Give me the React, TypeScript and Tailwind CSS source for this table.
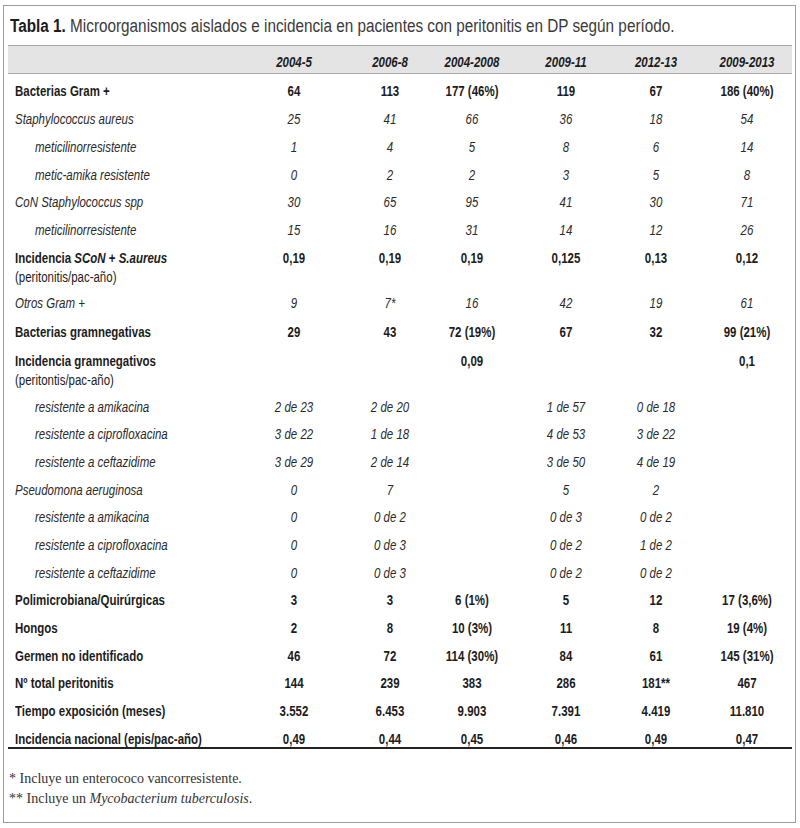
import React from 'react';

type Row = {
  label: React.ReactNode;
  sub?: string;
  vals: string[];
  kind: 'bold' | 'italic';
  indent?: boolean;
  h?: string;
};

const cols = 'grid grid-cols-[222px_128px_64px_100px_88px_92px_90px]';

const years = ['2004-5', '2006-8', '2004-2008', '2009-11', '2012-13', '2009-2013'];

const rows: Row[] = [
  { label: 'Bacterias Gram +', vals: ['64', '113', '177 (46%)', '119', '67', '186 (40%)'], kind: 'bold' },
  { label: 'Staphylococcus aureus', vals: ['25', '41', '66', '36', '18', '54'], kind: 'italic' },
  { label: 'meticilinorresistente', vals: ['1', '4', '5', '8', '6', '14'], kind: 'italic', indent: true },
  { label: 'metic-amika resistente', vals: ['0', '2', '2', '3', '5', '8'], kind: 'italic', indent: true },
  { label: 'CoN Staphylococcus spp', vals: ['30', '65', '95', '41', '30', '71'], kind: 'italic' },
  { label: 'meticilinorresistente', vals: ['15', '16', '31', '14', '12', '26'], kind: 'italic', indent: true },
  {
    label: (
      <>
        Incidencia <i>SCoN</i> + <i>S.aureus</i>
      </>
    ),
    sub: '(peritonitis/pac-año)',
    vals: ['0,19', '0,19', '0,19', '0,125', '0,13', '0,12'],
    kind: 'bold',
    h: 'h-[45px]',
  },
  { label: 'Otros Gram +', vals: ['9', '7*', '16', '42', '19', '61'], kind: 'italic', h: 'h-[29px]' },
  { label: 'Bacterias gramnegativas', vals: ['29', '43', '72 (19%)', '67', '32', '99 (21%)'], kind: 'bold', h: 'h-[29px]' },
  {
    label: 'Incidencia gramnegativos',
    sub: '(peritontis/pac-año)',
    vals: ['', '', '0,09', '', '', '0,1'],
    kind: 'bold',
    h: 'h-[46px]',
  },
  { label: 'resistente a amikacina', vals: ['2 de 23', '2 de 20', '', '1 de 57', '0 de 18', ''], kind: 'italic', indent: true },
  { label: 'resistente a ciprofloxacina', vals: ['3 de 22', '1 de 18', '', '4 de 53', '3 de 22', ''], kind: 'italic', indent: true },
  { label: 'resistente a ceftazidime', vals: ['3 de 29', '2 de 14', '', '3 de 50', '4 de 19', ''], kind: 'italic', indent: true },
  { label: 'Pseudomona aeruginosa', vals: ['0', '7', '', '5', '2', ''], kind: 'italic' },
  { label: 'resistente a amikacina', vals: ['0', '0 de 2', '', '0 de 3', '0 de 2', ''], kind: 'italic', indent: true },
  { label: 'resistente a ciprofloxacina', vals: ['0', '0 de 3', '', '0 de 2', '1 de 2', ''], kind: 'italic', indent: true },
  { label: 'resistente a ceftazidime', vals: ['0', '0 de 3', '', '0 de 2', '0 de 2', ''], kind: 'italic', indent: true },
  { label: 'Polimicrobiana/Quirúrgicas', vals: ['3', '3', '6 (1%)', '5', '12', '17 (3,6%)'], kind: 'bold' },
  { label: 'Hongos', vals: ['2', '8', '10 (3%)', '11', '8', '19 (4%)'], kind: 'bold' },
  { label: 'Germen no identificado', vals: ['46', '72', '114 (30%)', '84', '61', '145 (31%)'], kind: 'bold' },
  { label: 'Nº total peritonitis', vals: ['144', '239', '383', '286', '181**', '467'], kind: 'bold' },
  { label: 'Tiempo exposición (meses)', vals: ['3.552', '6.453', '9.903', '7.391', '4.419', '11.810'], kind: 'bold' },
  {
    label: 'Incidencia nacional (epis/pac-año)',
    vals: ['0,49', '0,44', '0,45', '0,46', '0,49', '0,47'],
    kind: 'bold',
    h: 'h-[21.2px]',
  },
];

// la tabla original usa una sans condensada; se aproxima comprimiendo Liberation Sans
const narrow = 'scale-x-[0.82]';

export default function App() {
  return (
    <div className="w-[800px] h-[828px] bg-white pt-[5px] pl-[3px] font-['Liberation_Sans',Arial,sans-serif] text-[#1c1c1c]">
      <div className="w-[793px] h-[818px] border border-[#9c9c9c]">
        {/* título */}
        <div className="pt-[8px] pl-[6px] whitespace-nowrap">
          <div className="scale-x-[0.85] origin-left text-[18px] leading-[24px] text-[#3a3a3a]">
            <span className="font-bold text-[#1c1c1c]">Tabla 1.</span> Microorganismos aislados e incidencia en
            pacientes con peritonitis en DP según período.
          </div>
        </div>

        <div className="mt-[6.8px] ml-[4px] w-[784px] text-[14px] leading-[19px]">
          <div className={`${cols} h-[29px] border-y border-[#a8a8a8] bg-[#e4e4e4] pt-[7px] font-bold italic`}>
            <div />
            {years.map((y) => (
              <div key={y} className={`text-center ${narrow}`}>
                {y}
              </div>
            ))}
          </div>

          <div className="mt-[4.2px] border-b-2 border-[#222]">
            {rows.map((r, i) => (
              <div
                key={i}
                className={`${cols} ${r.h ?? 'h-[27.7px]'} pt-[4.5px] ${r.kind === 'bold' ? 'font-bold' : 'italic text-[#2a2a2a]'}`}
              >
                <div className={`whitespace-nowrap ${r.indent ? 'pl-[27px]' : 'pl-[7px]'}`}>
                  <div className={`${narrow} origin-left`}>
                    <div>{r.label}</div>
                    {r.sub && <div className="font-normal not-italic">{r.sub}</div>}
                  </div>
                </div>
                {r.vals.map((v, j) => (
                  <div key={j} className={`text-center whitespace-nowrap ${narrow}`}>
                    {v}
                  </div>
                ))}
              </div>
            ))}
          </div>
        </div>

        {/* notas */}
        <div className="mt-[20px] pl-[5px] font-['Liberation_Serif',serif] text-[14px] leading-[20px] text-[#333]">
          <div>* Incluye un enterococo vancorresistente.</div>
          <div>
            ** Incluye un <i>Mycobacterium tuberculosis</i>.
          </div>
        </div>
      </div>
    </div>
  );
}
